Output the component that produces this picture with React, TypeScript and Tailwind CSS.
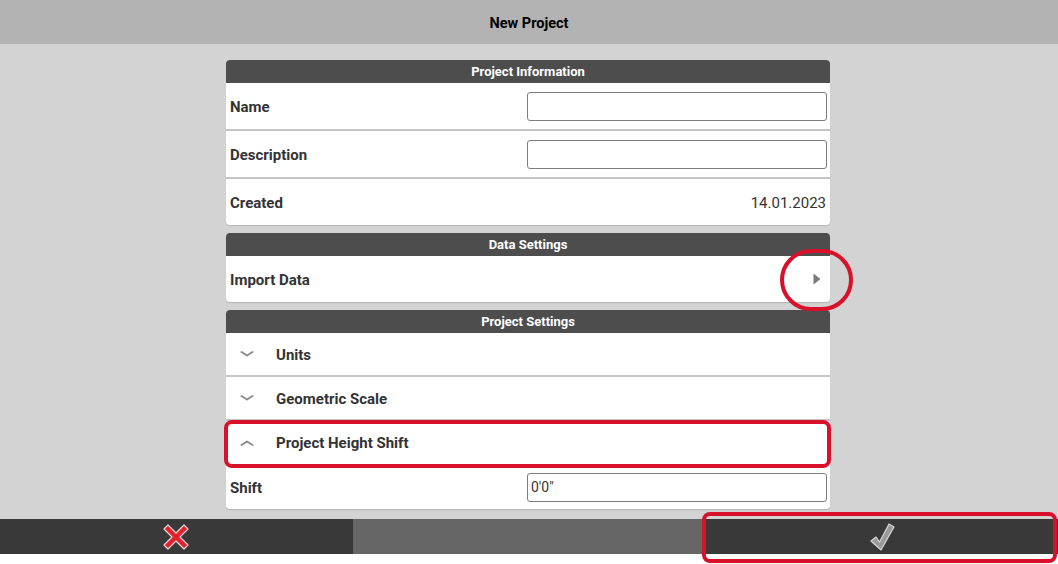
import React from 'react';

const narrow = "font-['Liberation_Sans_Narrow','Roboto',sans-serif]";

const SectionHeader = ({ title }: { title: string }) => (
    <div className="h-[23px] bg-[#4d4d4d] rounded-t-[4px] flex items-center justify-center text-white text-[13px] font-bold">
        {title}
    </div>
);

const Chevron = ({ up }: { up?: boolean }) => (
    <svg width="14" height="8" viewBox="0 0 14 8" className="shrink-0">
        <path
            d={up ? 'M1.5 6 L7 2.5 L12.5 6' : 'M1.5 2 L7 5.5 L12.5 2'}
            fill="none"
            stroke="#8c8c8c"
            strokeWidth="2"
            strokeLinecap="round"
            strokeLinejoin="round"
        />
    </svg>
);

const TextInput = ({ value }: { value?: string }) => (
    <div className={`w-[300px] h-[29px] mr-[3px] border border-[#7d7d7d] rounded-[3px] bg-white flex items-center px-[3px] text-[14px] text-[#333] ${narrow}`}>
        {value}
    </div>
);

const CrossIcon = () => (
    <svg width="28" height="28" viewBox="0 0 28 28">
        <path
            d="M6 2 L14 10 L22 2 L26 6 L18 14 L26 22 L22 26 L14 18 L6 26 L2 22 L10 14 L2 6 Z"
            fill="#e5202e"
            stroke="#f2d6d6"
            strokeWidth="1.2"
            strokeLinejoin="round"
        />
    </svg>
);

const CheckIcon = () => (
    <svg width="28" height="30" viewBox="0 0 28 30">
        <path
            d="M3 19 L8 15 L11.5 20 L21 2 L26 5 L13 28 Z"
            fill="#9a9a9a"
            stroke="#d6d6d6"
            strokeWidth="1.2"
            strokeLinejoin="round"
        />
    </svg>
);

export default function App() {
    return (
        <div className="relative w-full h-[564px] flex flex-col bg-white font-['Roboto',sans-serif] overflow-hidden">
            {/* Title bar */}
            <div className={`h-[44px] shrink-0 bg-[#b3b3b3] flex items-center justify-center pt-[3px] text-[14.5px] font-bold text-black ${narrow}`}>
                New Project
            </div>

            {/* Scroll area */}
            <div className="h-[475px] shrink-0 bg-[#d3d3d3] overflow-hidden pt-[16px]">
                <div className="w-[604px] ml-[226px] flex flex-col gap-[8px]">
                    {/* Project Information */}
                    <div className="bg-white rounded-[4px] shadow-[0_1px_1px_rgba(0,0,0,0.15)]">
                        <SectionHeader title="Project Information" />
                        <div className="h-[48px] border-b-2 border-[#c4c4c4] flex items-center justify-between pl-[4px]">
                            <span className="text-[15px] font-bold text-[#333] pt-[3px]">Name</span>
                            <TextInput />
                        </div>
                        <div className="h-[48px] border-b-2 border-[#c4c4c4] flex items-center justify-between pl-[4px]">
                            <span className="text-[15px] font-bold text-[#333] pt-[3px]">Description</span>
                            <TextInput />
                        </div>
                        <div className="h-[46px] flex items-center justify-between pl-[4px] pr-[4px] pt-[3px]">
                            <span className="text-[15px] font-bold text-[#333]">Created</span>
                            <span className="text-[15px] text-[#333]">14.01.2023</span>
                        </div>
                    </div>

                    {/* Data Settings */}
                    <div className="bg-white rounded-[4px] shadow-[0_1px_1px_rgba(0,0,0,0.15)]">
                        <SectionHeader title="Data Settings" />
                        <div className="h-[46px] flex items-center justify-between pl-[4px] pr-[9px]">
                            <span className="text-[15px] font-bold text-[#333] pt-[2px]">Import Data</span>
                            <svg width="8" height="12" viewBox="0 0 8 12">
                                <path d="M0.5 0.5 L7.5 6 L0.5 11.5 Z" fill="#7a7a7a" />
                            </svg>
                        </div>
                    </div>

                    {/* Project Settings */}
                    <div className="bg-white rounded-[4px] shadow-[0_1px_1px_rgba(0,0,0,0.15)]">
                        <SectionHeader title="Project Settings" />
                        <div className="h-[44px] border-b-2 border-[#c4c4c4] flex items-center pl-[14px] gap-[22px]">
                            <Chevron />
                            <span className="text-[15px] font-bold text-[#333] pt-[2px]">Units</span>
                        </div>
                        <div className="h-[44px] border-b-2 border-[#c4c4c4] flex items-center pl-[14px] gap-[22px]">
                            <Chevron />
                            <span className="text-[15px] font-bold text-[#333] pt-[2px]">Geometric Scale</span>
                        </div>
                        <div className="h-[44px] flex items-center pl-[14px] gap-[22px]">
                            <Chevron up />
                            <span className={`text-[15px] font-bold text-[#333] ${narrow}`}>Project Height Shift</span>
                        </div>
                        <div className="h-[44px] flex items-center justify-between pl-[4px]">
                            <span className={`text-[15px] font-bold text-[#333] pt-[2px] ${narrow}`}>Shift</span>
                            <TextInput value={'0\'0"'} />
                        </div>
                    </div>
                </div>
            </div>

            {/* Bottom actions */}
            <div className="h-[35px] shrink-0 grid grid-cols-3">
                <div className="bg-[#393939] flex items-center justify-center">
                    <CrossIcon />
                </div>
                <div className="bg-[#666666]" />
                <div className="bg-[#393939] flex items-center justify-center">
                    <CheckIcon />
                </div>
            </div>
            <div className="flex-1 bg-white" />

            {/* Annotation marks */}
            <div className="absolute left-[780px] top-[249px] w-[73px] h-[62px] rounded-full border-4 border-[#d8102a] pointer-events-none" />
            <div className="absolute left-[224px] top-[420px] w-[607px] h-[48px] rounded-[8px] border-4 border-[#d8102a] pointer-events-none" />
            <div className="absolute left-[702px] top-[512px] w-[355px] h-[51px] rounded-[8px] border-4 border-[#d8102a] pointer-events-none" />
        </div>
    );
}
